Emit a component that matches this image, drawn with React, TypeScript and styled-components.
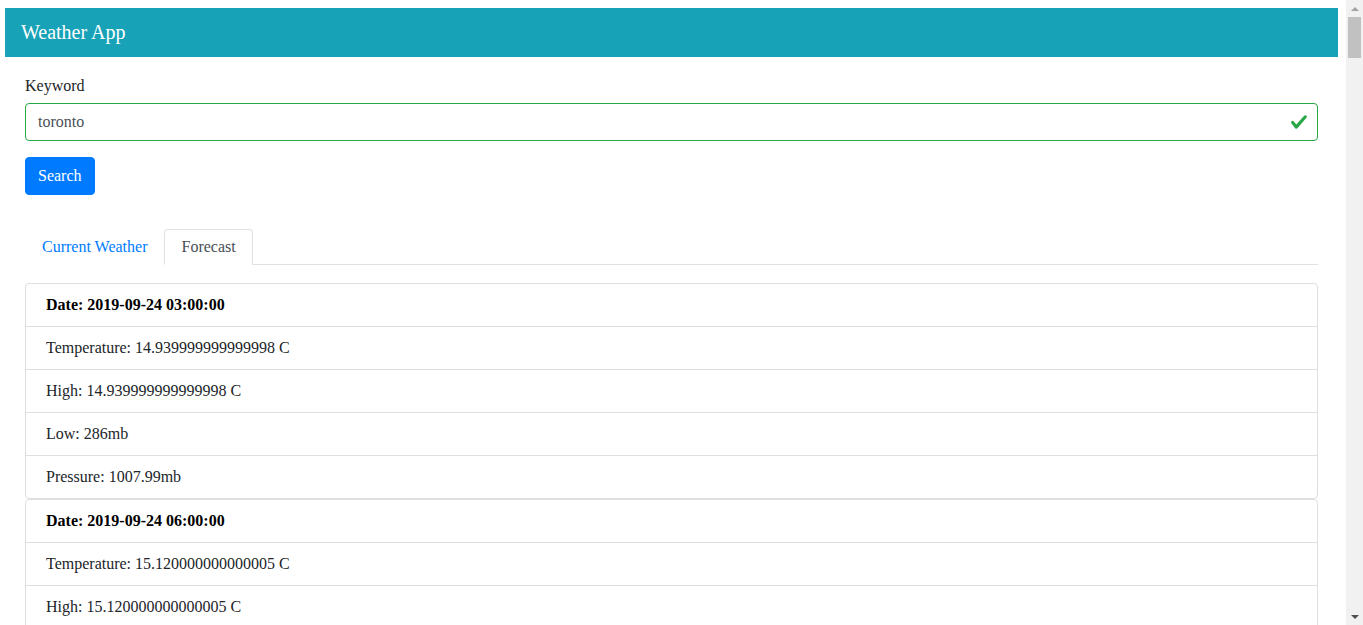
import * as React from "react";
import styled, { createGlobalStyle } from "styled-components";

const GlobalStyle = createGlobalStyle`
	html, body {
		margin: 0;
		padding: 0;
		height: 100%;
		overflow: hidden;
		background: #fff;
	}
	body {
		font-family: "Liberation Serif", "Times New Roman", serif;
		font-size: 16px;
		color: #212529;
	}
	* {
		box-sizing: border-box;
	}
`;

const Shell = styled.div`
	display: flex;
	height: 100vh;
`;

const Viewport = styled.div`
	flex: 1;
	min-width: 0;
	overflow-y: auto;
	scrollbar-width: none;
	&::-webkit-scrollbar {
		display: none;
	}
`;

const Rail = styled.aside`
	width: 17px;
	flex: none;
	display: flex;
	flex-direction: column;
	background: #f1f1f1;
`;

const Arrow = styled.div<{ $down?: boolean }>`
	height: 17px;
	display: flex;
	align-items: center;
	justify-content: center;
	&::before {
		content: "";
		border-left: 4px solid transparent;
		border-right: 4px solid transparent;
		${(p) =>
			p.$down
				? "border-top: 4px solid #505050;"
				: "border-bottom: 4px solid #a3a3a3;"}
	}
`;

const Thumb = styled.div`
	height: 41px;
	margin: 0 2px;
	background: #c1c1c1;
`;

const RailSpace = styled.div`
	flex: 1;
`;

const Page = styled.div`
	padding: 8px 8px 0 5px;
`;

const Header = styled.header`
	background: #17a2b8;
	color: #fff;
	height: 49px;
	line-height: 49px;
	padding: 0 16px;
	font-size: 20px;
`;

const Main = styled.main`
	padding: 20px 20px 0 20px;
`;

const Label = styled.label`
	display: block;
	line-height: 18px;
	margin-bottom: 8px;
`;

const InputWrap = styled.div`
	position: relative;
	margin-bottom: 16px;
`;

const Input = styled.input`
	display: block;
	width: 100%;
	height: 38px;
	padding: 6px 36px 6px 12px;
	font-family: inherit;
	font-size: 16px;
	color: #495057;
	border: 1px solid #28a745;
	border-radius: 4px;
	outline: none;
`;

const CheckIcon = styled.svg`
	position: absolute;
	right: 10px;
	top: 10px;
	width: 18px;
	height: 18px;
`;

const Button = styled.button`
	display: block;
	height: 38px;
	padding: 0 12px;
	font-family: inherit;
	font-size: 16px;
	color: #fff;
	background: #007bff;
	border: 1px solid #007bff;
	border-radius: 4px;
	cursor: pointer;
`;

const Tabs = styled.nav`
	display: flex;
	margin-top: 34px;
	border-bottom: 1px solid #dee2e6;
`;

const Tab = styled.a<{ $active?: boolean }>`
	display: block;
	padding: 8px 16px;
	line-height: 18px;
	margin-bottom: -1px;
	border: 1px solid ${(p) => (p.$active ? "#dee2e6" : "transparent")};
	border-bottom-color: ${(p) => (p.$active ? "#fff" : "transparent")};
	border-radius: 4px 4px 0 0;
	background: #fff;
	color: ${(p) => (p.$active ? "#495057" : "#007bff")};
	text-decoration: none;
	cursor: pointer;
`;

const Cards = styled.div`
	margin-top: 18px;
`;

const ListGroup = styled.ul`
	list-style: none;
	margin: 0;
	padding: 0;
	border: 1px solid #dfdfdf;
	border-radius: 4px;
`;

const Item = styled.li<{ $bold?: boolean }>`
	padding: 12px 20px;
	line-height: 18px;
	font-weight: ${(p) => (p.$bold ? "bold" : "normal")};
	color: ${(p) => (p.$bold ? "#000" : "#212529")};
	& + & {
		border-top: 1px solid #dfdfdf;
	}
`;

interface IForecast {
	date: string;
	temp: string;
	high: string;
	low: string;
	pressure: string;
}

const forecast: IForecast[] = [
	{
		date: "2019-09-24 03:00:00",
		temp: "14.939999999999998",
		high: "14.939999999999998",
		low: "286mb",
		pressure: "1007.99mb",
	},
	{
		date: "2019-09-24 06:00:00",
		temp: "15.120000000000005",
		high: "15.120000000000005",
		low: "286mb",
		pressure: "1008.43mb",
	},
	{
		date: "2019-09-24 09:00:00",
		temp: "14.090000000000032",
		high: "14.090000000000032",
		low: "285mb",
		pressure: "1009.12mb",
	},
];

export default function App() {
	const [keyword, setKeyword] = React.useState("toronto");
	const [tab, setTab] = React.useState("forecast");

	return (
		<Shell>
			<GlobalStyle />
			<Viewport>
				<Page>
					<Header>Weather App</Header>
					<Main>
						<Label htmlFor="keyword">Keyword</Label>
						<InputWrap>
							<Input
								id="keyword"
								value={keyword}
								onChange={(e) => setKeyword(e.target.value)}
							/>
							<CheckIcon viewBox="0 0 8 8">
								<path
									fill="#28a745"
									d="M2.3 6.73L.6 4.53c-.4-1.04.46-1.4 1.1-.8l1.1 1.4 3.4-3.8c.6-.63 1.6-.27 1.2.7l-4 4.6c-.43.5-.8.4-1.1.1z"
								/>
							</CheckIcon>
						</InputWrap>
						<Button>Search</Button>
						<Tabs>
							<Tab $active={tab === "current"} onClick={() => setTab("current")}>
								Current Weather
							</Tab>
							<Tab $active={tab === "forecast"} onClick={() => setTab("forecast")}>
								Forecast
							</Tab>
						</Tabs>
						<Cards>
							{forecast.map((f, idx) => (
								<ListGroup key={idx}>
									<Item $bold>Date: {f.date}</Item>
									<Item>Temperature: {f.temp} C</Item>
									<Item>High: {f.high} C</Item>
									<Item>Low: {f.low}</Item>
									<Item>Pressure: {f.pressure}</Item>
								</ListGroup>
							))}
						</Cards>
					</Main>
				</Page>
			</Viewport>
			<Rail>
				<Arrow />
				<Thumb />
				<RailSpace />
				<Arrow $down />
			</Rail>
		</Shell>
	);
}
